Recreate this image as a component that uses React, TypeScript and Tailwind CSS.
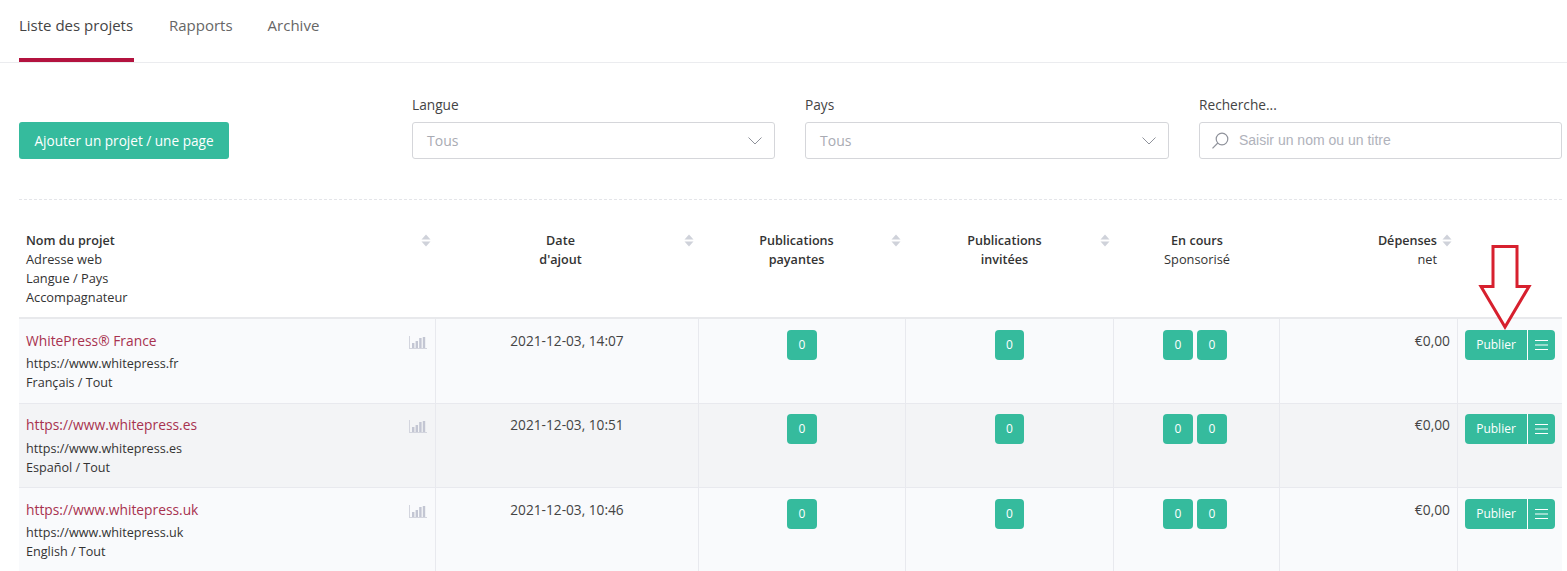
import React from "react";

const GRID = "grid grid-cols-[417px_263px_207px_208px_166px_178px_104px]";

function Sort() {
  return (
    <svg width="10" height="13" viewBox="0 0 10 13" className="shrink-0 mt-[3px]" fill="#cfd2da">
      <path d="M5 0.5 L9.5 5.5 H0.5 Z" />
      <path d="M5 12.5 L9.5 7.5 H0.5 Z" />
    </svg>
  );
}

function Bars() {
  return (
    <svg width="18" height="13" viewBox="0 0 18 13" className="mt-[2px]">
      <rect x="0" y="0" width="1" height="13" fill="#d3d5de" />
      <rect x="0" y="12" width="18" height="1" fill="#d3d5de" />
      <rect x="3" y="7" width="2.4" height="5" fill="#c3c6d3" />
      <rect x="6.6" y="5" width="2.4" height="7" fill="#c3c6d3" />
      <rect x="10.2" y="2" width="2.4" height="10" fill="#c3c6d3" />
      <rect x="13.8" y="1" width="2.4" height="11" fill="#c3c6d3" />
    </svg>
  );
}

function Chevron() {
  return (
    <svg width="14" height="8" viewBox="0 0 14 8" fill="none" stroke="#8f929b" strokeWidth="1">
      <path d="M0.5 0.5 L7 7 L13.5 0.5" />
    </svg>
  );
}

function Zero({ w = "w-[30px]" }: { w?: string }) {
  return (
    <span className={`${w} h-[30px] rounded-[4px] bg-[#35bb9d] text-white text-[12px] flex items-center justify-center`}>0</span>
  );
}

function Select({ label, w }: { label: string; w: string }) {
  return (
    <div className={w}>
      <div className="text-[13.7px] leading-[18px] text-[#444] mb-[8px]">{label}</div>
      <div className="h-[37px] border border-[#d5d6da] rounded-[3px] bg-white flex items-center justify-between pl-[14px] pr-[12px]">
        <span className="text-[14px] text-[#a9abb3]">Tous</span>
        <Chevron />
      </div>
    </div>
  );
}

const rows = [
  { title: "WhitePress® France", url: "https://www.whitepress.fr", lang: "Français / Tout", date: "2021-12-03, 14:07", bg: "bg-[#f9fafc]", h: "h-[85px]", titlePad: "pt-[11px]", urlGap: "mt-[3px]", datePad: "pt-[12px]", badgePad: "pt-[11px]" },
  { title: "https://www.whitepress.es", url: "https://www.whitepress.es", lang: "Español / Tout", date: "2021-12-03, 10:51", bg: "bg-[#f3f4f6]", h: "h-[84px]", titlePad: "pt-[10px]", urlGap: "mt-[4px]", datePad: "pt-[11px]", badgePad: "pt-[10px]" },
  { title: "https://www.whitepress.uk", url: "https://www.whitepress.uk", lang: "English / Tout", date: "2021-12-03, 10:46", bg: "bg-[#f9fafc]", h: "h-[84px]", titlePad: "pt-[11px]", urlGap: "mt-[3px]", datePad: "pt-[12px]", badgePad: "pt-[11px]" },
];

const cell = "border-r border-[#e8e9ee]";

export default function App() {
  return (
    <div className="relative h-[571px] w-[1567px] overflow-hidden bg-white text-[#333] font-['Open_Sans',sans-serif]">
      <nav className="h-[63px] border-b border-[#ebecef] px-[19px] flex gap-[35px] text-[15px]">
        <div className="h-[62px] pt-[14px] w-[115px] border-b-[4px] border-[#b3133f] text-[#444] whitespace-nowrap">Liste des projets</div>
        <div className="pt-[14px] text-[#666]">Rapports</div>
        <div className="pt-[14px] text-[#666]">Archive</div>
      </nav>

      <section className="mx-[19px] mr-[5px] h-[137px] border-b border-dashed border-[#e4e5e9] pt-[33px] flex">
        <button className="mt-[26px] h-[37px] w-[210px] shrink-0 pt-[1px] rounded-[3px] bg-[#35bb9d] text-white text-[13.6px] whitespace-nowrap">Ajouter un projet / une page</button>
        <div className="ml-[183px] flex gap-[30px]">
          <Select label="Langue" w="w-[363px]" />
          <Select label="Pays" w="w-[364px]" />
          <div className="w-[363px]">
            <div className="text-[13.7px] leading-[18px] text-[#444] mb-[8px]">Recherche...</div>
            <div className="h-[37px] border border-[#d5d6da] rounded-[3px] bg-white flex items-center pl-[11px] gap-[8px]">
              <svg width="20" height="20" viewBox="0 0 20 20" fill="none" stroke="#8f929b" strokeWidth="1.2">
                <circle cx="11" cy="8" r="5.8" />
                <path d="M6.8 12 L1.5 17.3" />
              </svg>
              <span className="font-['Liberation_Sans',sans-serif] text-[14px] text-[#b0b2bb]">Saisir un nom ou un titre</span>
            </div>
          </div>
        </div>
      </section>

      <div className="ml-[19px] w-[1543px]">
        <div className={`${GRID} h-[119px] pt-[31px] border-b-[2px] border-[#e8e9ec] text-[12.8px] leading-[19px] text-[#333]`}>
          <div className="flex pl-[7px] pr-[5px]">
            <div className="flex-1">
              <div className="font-semibold text-[12.6px]">Nom du projet</div>
              <div>Adresse web</div>
              <div>Langue / Pays</div>
              <div>Accompagnateur</div>
            </div>
            <Sort />
          </div>
          <div className="flex pl-[7px] pr-[5px]">
            <div className="flex-1 pr-[6px] text-center font-semibold text-[12.6px]">Date<br />d'ajout</div>
            <Sort />
          </div>
          <div className="flex pl-[3px] pr-[5px]">
            <div className="flex-1 text-center font-semibold text-[12.6px]">Publications<br />payantes</div>
            <Sort />
          </div>
          <div className="flex pl-[3px] pr-[4px]">
            <div className="flex-1 text-center font-semibold text-[12.6px]">Publications<br />invitées</div>
            <Sort />
          </div>
          <div className="text-center"><span className="font-semibold text-[12.6px]">En cours</span><br />Sponsorisé</div>
          <div className="flex justify-end gap-[5px] pr-[6px]">
            <div className="text-right"><span className="font-semibold text-[12.6px]">Dépenses</span><br />net</div>
            <Sort />
          </div>
          <div />
        </div>

        {rows.map((r) => (
          <div key={r.date} className={`${GRID} ${r.h} ${r.bg} border-b border-[#e8e9ee] text-[12.6px]`}>
            <div className={`${cell} flex justify-between pl-[7px] pr-[8px] ${r.titlePad}`}>
              <div>
                <div className="text-[13.8px] leading-[21px] text-[#a8324f]">{r.title}</div>
                <div className={`${r.urlGap} leading-[19px]`}>{r.url}</div>
                <div className="leading-[19px]">{r.lang}</div>
              </div>
              <div className="pt-[4px]"><Bars /></div>
            </div>
            <div className={`${cell} text-center ${r.datePad} text-[13.7px] leading-[20px] text-[#444]`}>{r.date}</div>
            <div className={`${cell} flex justify-center ${r.badgePad}`}><Zero /></div>
            <div className={`${cell} flex justify-center ${r.badgePad}`}><Zero w="w-[29px]" /></div>
            <div className={`${cell} flex justify-center gap-[4px] ${r.badgePad} pr-[3px]`}><Zero /><Zero /></div>
            <div className={`${cell} text-right pr-[7px] ${r.datePad} text-[13.8px] leading-[20px] text-[#444]`}>€0,00</div>
            <div className={`pl-[7px] ${r.badgePad}`}>
              <div className="flex w-[90px] h-[30px] rounded-[4px] bg-[#35bb9d] text-white">
                <span className="w-[63px] text-[12px] flex items-center justify-center border-r border-white">Publier</span>
                <span className="flex-1 flex items-center justify-center">
                  <svg width="13" height="10" viewBox="0 0 13 10" stroke="#fff" strokeWidth="1">
                    <path d="M0 0.5 H13 M0 5 H13 M0 9.5 H13" />
                  </svg>
                </span>
              </div>
            </div>
          </div>
        ))}
      </div>

      <svg className="absolute left-[1478px] top-[243px]" width="54" height="88" viewBox="0 0 54 88" fill="#fff" stroke="#d7202e" strokeWidth="3">
        <path d="M15 3.5 H39 V43.5 H51 L27 84 L3 43.5 H15 Z" />
      </svg>
    </div>
  );
}
